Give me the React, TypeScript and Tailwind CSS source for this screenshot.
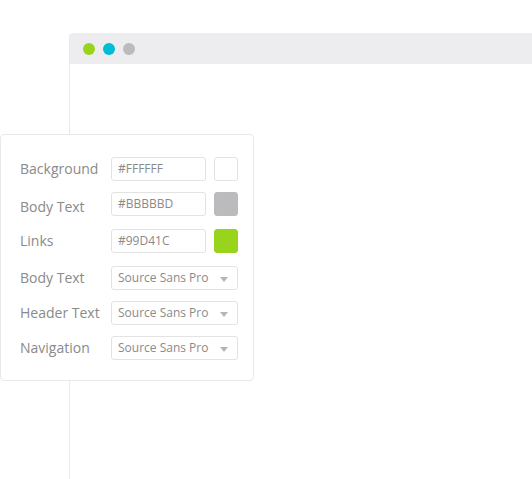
import React from "react";

const font = { fontFamily: '"Open Sans", "Noto Sans", sans-serif' };

function Label({ children, extra = "" }: { children: React.ReactNode; extra?: string }) {
  return <div className={`w-[91px] shrink-0 text-[14px] leading-[24px] text-[#8a8a8a] ${extra}`}>{children}</div>;
}

function ColorRow({ label, value, swatch, mt, labelExtra = "" }: { label: string; value: string; swatch: string; mt: string; labelExtra?: string }) {
  return (
    <div className={`flex items-center ${mt}`}>
      <Label extra={labelExtra}>{label}</Label>
      <div className="flex h-[24px] w-[95px] items-center rounded-[3px] border border-[#e3e3e3] pl-[6px] text-[12px] text-[#8a8a8a]">
        {value}
      </div>
      <div
        className="ml-[8px] h-[24px] w-[24px] rounded-[3px] border border-[#e3e3e3]"
        style={{ backgroundColor: swatch, borderColor: swatch === "#FFFFFF" ? "#e3e3e3" : swatch }}
      />
    </div>
  );
}

function SelectRow({ label, mt }: { label: string; mt: string }) {
  return (
    <div className={`flex items-center ${mt}`}>
      <Label>{label}</Label>
      <div className="flex h-[24px] w-[127px] items-center justify-between rounded-[3px] border border-[#e3e3e3] pl-[6px] pr-[9px] text-[12px] text-[#8a8a8a]">
        <span>Source Sans Pro</span>
        <svg width="8" height="5" viewBox="0 0 8 5" className="mt-[2px]">
          <polygon points="0,0 8,0 4,5" fill="#b5b5b5" />
        </svg>
      </div>
    </div>
  );
}

export default function App() {
  return (
    <div className="relative h-[479px] w-[532px] overflow-hidden bg-white" style={font}>
      <div className="absolute left-[69px] top-[33px] h-[480px] w-[500px] rounded-tl-[4px] border-l border-[#e9e9ec] bg-white">
        <div className="flex h-[31px] items-center gap-[8px] rounded-tl-[4px] bg-[#ededf0] pl-[13px]">
          <span className="h-[12px] w-[12px] rounded-full bg-[#99D41C]" />
          <span className="h-[12px] w-[12px] rounded-full bg-[#00BCD4]" />
          <span className="h-[12px] w-[12px] rounded-full bg-[#BBBBBD]" />
        </div>
      </div>
      <div className="absolute left-0 top-[134px] flex h-[247px] w-[254px] flex-col rounded-[4px] border border-[#e8e8e8] bg-white pl-[19px] pt-[22px]">
        <ColorRow label="Background" value="#FFFFFF" swatch="#FFFFFF" mt="mt-0" />
        <div className="-my-[3px]">
          <ColorRow label="Body Text" value="#BBBBBD" swatch="#BBBBBD" mt="mt-[11px]" labelExtra="pt-[6px]" />
        </div>
        <ColorRow label="Links" value="#99D41C" swatch="#99D41C" mt="mt-[13px]" />
        <SelectRow label="Body Text" mt="mt-[13px]" />
        <SelectRow label="Header Text" mt="mt-[11px]" />
        <SelectRow label="Navigation" mt="mt-[11px]" />
      </div>
    </div>
  );
}
